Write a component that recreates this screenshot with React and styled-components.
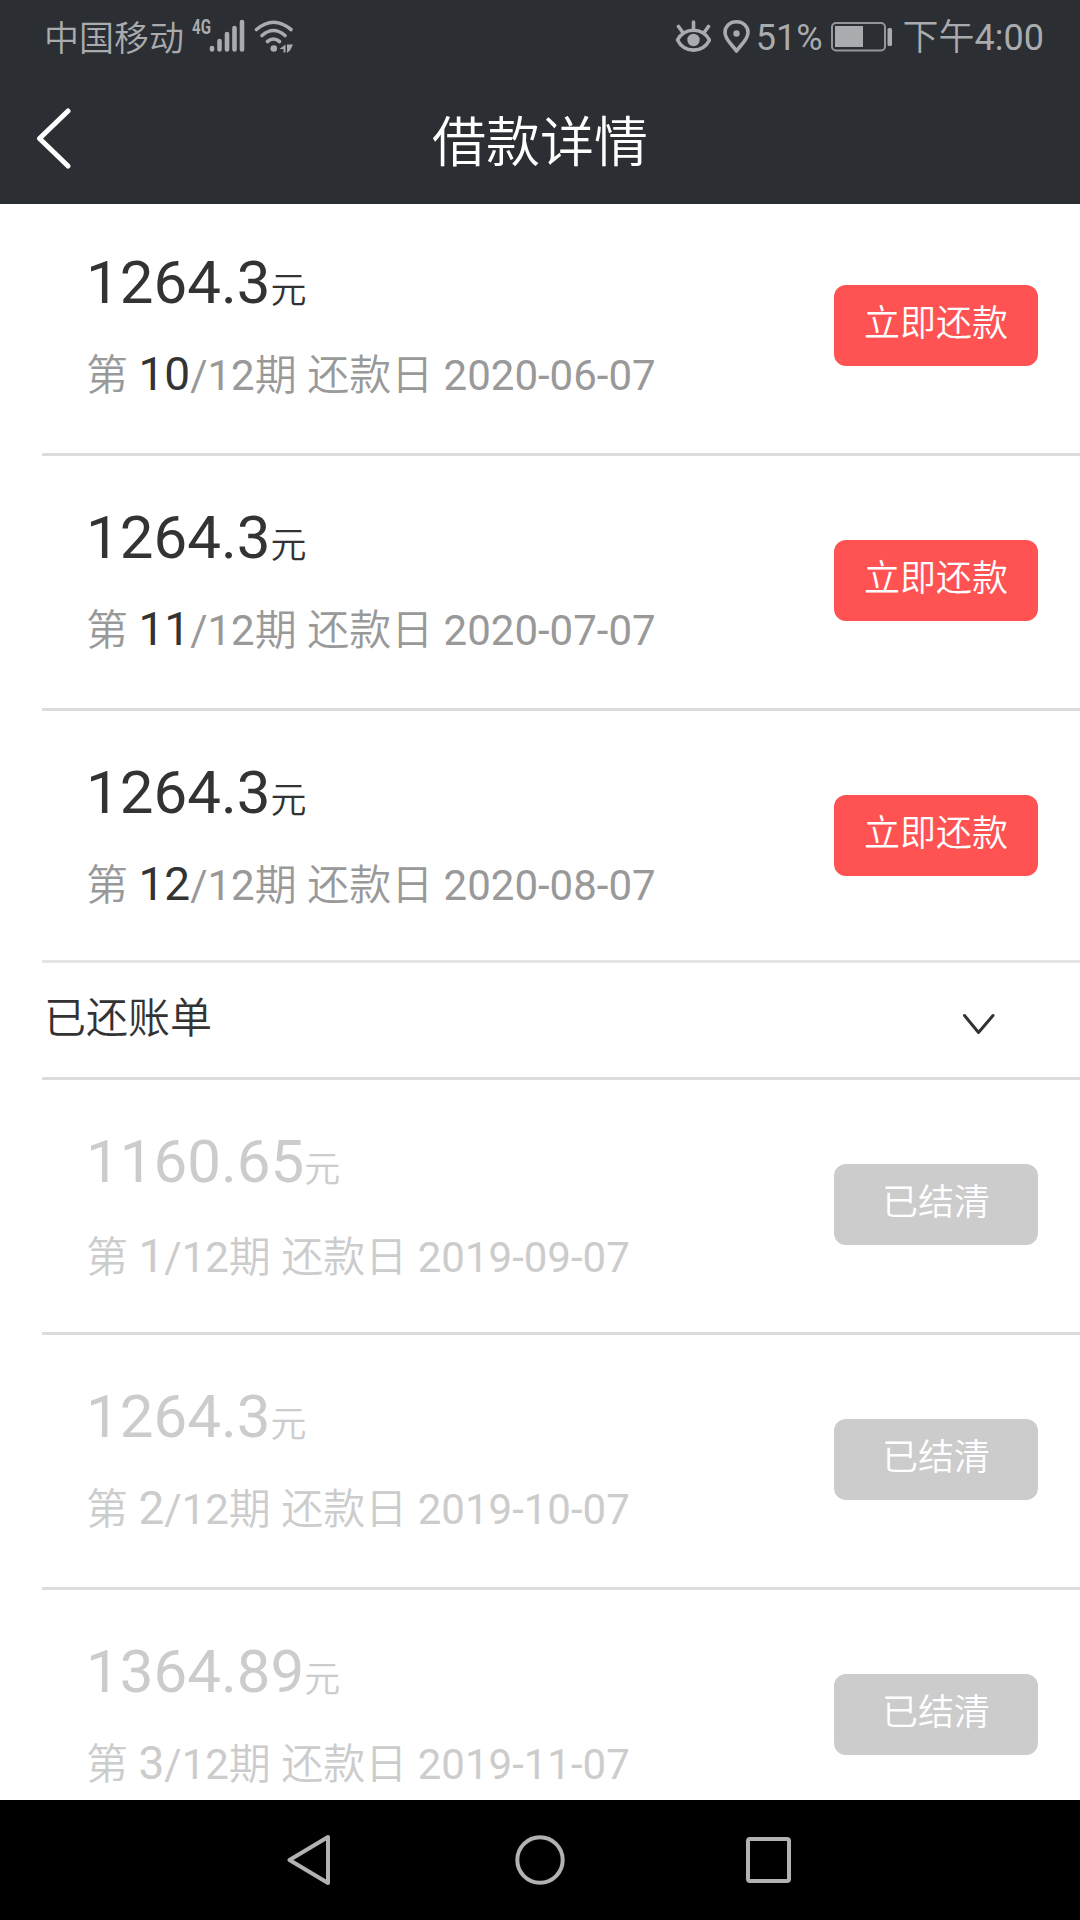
import React from 'react';
import styled, { createGlobalStyle } from 'styled-components';

const openBills = [
  { amount: '1264.3', period: 10, date: '2020-06-07' },
  { amount: '1264.3', period: 11, date: '2020-07-07' },
  { amount: '1264.3', period: 12, date: '2020-08-07' },
];

const settledBills = [
  { amount: '1160.65', period: 1, date: '2019-09-07' },
  { amount: '1264.3', period: 2, date: '2019-10-07' },
  { amount: '1364.89', period: 3, date: '2019-11-07' },
];

const SignalIcon = () => (
  <svg width="36" height="36" viewBox="0 0 36 36" stroke="#a9abae" strokeWidth="4.6" strokeLinecap="round">
    <path d="M3 29v1.500M10.500 22v8.500M18 15v15.500M25.500 9v21.500M33 3v27.500" />
  </svg>
);

const WifiIcon = () => (
  <svg width="40" height="36" viewBox="0 0 40 36" fill="none" stroke="#a9abae" strokeWidth="3.6" strokeLinecap="round">
    <path d="M2.500 10.500Q19.500 -4 37 10.500M8 16.500Q19.500 6.500 31 16.500M13.500 22.500Q19.500 17.500 25.500 22.500" />
    <circle cx="19.800" cy="29.500" r="3.300" fill="#a9abae" stroke="none" />
    <path d="M31.500 25.500v8h-2v-3.500h-4zM33 34v-8.500h6l-3 6z" fill="#a9abae" stroke="none" />
  </svg>
);

const EyeIcon = () => (
  <svg width="36" height="34" viewBox="0 0 36 34" fill="none" stroke="#a9abae" strokeWidth="3.6" strokeLinecap="round">
    <path d="M2.500 20C9.500 7 27.500 7 34.500 20C27.500 33.500 9.500 33.500 2.500 20Z" strokeLinejoin="round" />
    <path d="M18.500 2v7M3.500 6.500l4 5.500M33.500 6.500l-4 5.500" />
    <circle cx="18.500" cy="20" r="6.200" fill="#a9abae" stroke="none" />
  </svg>
);

const PinIcon = () => (
  <svg width="28" height="34" viewBox="0 0 28 34" fill="none" stroke="#a9abae" strokeWidth="3.6" strokeLinejoin="round">
    <path d="M14.500 31C9.500 24 3 19.500 3 12.500C3 6 8 1.800 14.500 1.800S26 6 26 12.500C26 19.500 19.500 24 14.500 31Z" />
    <circle cx="14.500" cy="13.500" r="3.200" fill="#a9abae" stroke="none" />
  </svg>
);

const BatteryIcon = () => (
  <svg width="62" height="30" viewBox="0 0 62 30">
    <rect x="1" y="1" width="53" height="27.500" rx="4" fill="none" stroke="#94969a" strokeWidth="2" />
    <rect x="4" y="4" width="28" height="21" fill="#a9abae" />
    <rect x="56.500" y="6" width="4.500" height="18" rx="1.500" fill="#a9abae" />
  </svg>
);

const BillRow = ({ bill, settled }) => (
  <Row $settled={settled}>
    <RowInfo>
      <Amount>
        {bill.amount}
        <Unit>元</Unit>
      </Amount>
      <Schedule $settled={settled}>
        <Han>第</Han>
        {' '}
        <Period $settled={settled}>{bill.period}</Period>
        /12
        <Han>期</Han>
        {' '}
        <Han>还款日</Han>
        {` ${bill.date}`}
      </Schedule>
    </RowInfo>
    <PayButton type="button" $settled={settled}>{settled ? '已结清' : '立即还款'}</PayButton>
  </Row>
);

const App = () => (
  <Screen>
    <GlobalStyle />
    <StatusBar>
      <StatusGroup>
        <Carrier>中国移动</Carrier>
        <Network>4G</Network>
        <SignalIcon />
        <WifiSlot><WifiIcon /></WifiSlot>
      </StatusGroup>
      <StatusGroup>
        <EyeIcon />
        <PinSlot><PinIcon /></PinSlot>
        <Percent>51%</Percent>
        <BatteryIcon />
        <Clock>
          <Han>下午</Han>
          4:00
        </Clock>
      </StatusGroup>
    </StatusBar>
    <TitleBar>
      <BackButton type="button" aria-label="返回">
        <svg width="36" height="62" viewBox="0 0 36 62" fill="none" stroke="#fff" strokeWidth="5" strokeLinecap="round" strokeLinejoin="round">
          <path d="M32 3L3.500 30.500L32 58" />
        </svg>
      </BackButton>
      <Title>借款详情</Title>
    </TitleBar>
    <Content>
      <OpenList>
        {openBills.map((bill) => <BillRow key={bill.period} bill={bill} />)}
      </OpenList>
      <SectionHeader>
        <SectionTitle>已还账单</SectionTitle>
        <SectionArrow width="34" height="24" viewBox="0 0 34 24">
          <path d="M2.500 2.500L16.500 19.500L31 2.500" />
        </SectionArrow>
      </SectionHeader>
      <SettledList>
        {settledBills.map((bill) => <BillRow key={bill.period} bill={bill} settled />)}
      </SettledList>
    </Content>
    <NavBar>
      <svg width="46" height="52" viewBox="0 0 46 52" fill="none" stroke="#b2b2b2" strokeWidth="4" strokeLinejoin="round">
        <path d="M41 3v46L2.500 26Z" />
      </svg>
      <svg width="50" height="50" viewBox="0 0 50 50" fill="none" stroke="#b2b2b2" strokeWidth="4">
        <circle cx="25" cy="25" r="22.700" />
      </svg>
      <svg width="46" height="46" viewBox="0 0 46 46" fill="none" stroke="#b2b2b2" strokeWidth="4">
        <rect x="2" y="2" width="41" height="42" rx="2" />
      </svg>
    </NavBar>
  </Screen>
);

export default App;

// region STYLES

const GlobalStyle = createGlobalStyle`
  body {
    margin: 0;
    background: #ffffff;
  }

  * {
    box-sizing: border-box;
  }

  svg {
    display: block;
    flex-shrink: 0;
  }

  button {
    padding: 0;
    border: none;
    font: inherit;
  }
`;

const Screen = styled.div`
  display: flex;
  flex-direction: column;
  width: 1080px;
  height: 1920px;
  overflow: hidden;
  background: #ffffff;
  font-family: Roboto, "Noto Sans CJK SC", sans-serif;
  font-weight: 400;
  color: #333333;
`;

const Han = styled.span`
  font-weight: 350;
`;

const StatusBar = styled.div`
  display: flex;
  justify-content: space-between;
  flex-shrink: 0;
  height: 74px;
  padding: 0 36px 0 44px;
  background: #2b2e32;
  color: #a9abae;
`;

const StatusGroup = styled.div`
  display: flex;
  align-items: center;
`;

const Carrier = styled(Han)`
  padding-top: 5px;
  font-size: 35px;
  line-height: 69px;
`;

const Network = styled.span`
  align-self: flex-start;
  width: 17px;
  margin: 17px 0 0 8px;
  font-size: 21px;
  font-weight: 700;
  line-height: 21px;
  transform: scaleX(0.72);
  transform-origin: left center;
`;

const WifiSlot = styled.div`
  margin-left: 9px;
`;

const PinSlot = styled.div`
  margin-left: 11px;
`;

const Percent = styled.span`
  margin: 0 8px 0 6px;
  padding-top: 2px;
  font-size: 36px;
`;

const Clock = styled.span`
  margin-left: 10px;
  padding-top: 2px;
  font-size: 36px;
  line-height: 72px;
`;

const TitleBar = styled.div`
  display: flex;
  align-items: center;
  flex-shrink: 0;
  height: 130px;
  padding: 0 36px;
  background: #2b2e32;
  color: #ffffff;
`;

const BackButton = styled.button`
  width: 36px;
  background: none;
`;

const Title = styled.h1`
  flex: 1;
  margin: 0 36px 0 0;
  padding-top: 10px;
  font-size: 54px;
  font-weight: 350;
  line-height: 120px;
  text-align: center;
`;

const Content = styled.div`
  flex: 1;
  min-height: 0;
  padding-left: 42px;
  overflow: hidden;
`;

const Row = styled.div`
  display: flex;
  justify-content: space-between;
  align-items: flex-start;
  height: 255px;
  padding: 0 42px 0 44px;
  border-bottom: 3px solid #dcdcdc;
  color: ${(props) => (props.$settled ? '#cccccc' : '#333333')};
`;

const RowInfo = styled.div`
  padding-top: 42px;
`;

const Amount = styled.div`
  height: 80px;
  font-size: 60px;
  line-height: 80px;
  white-space: nowrap;
`;

const Unit = styled(Han)`
  font-size: 36px;
`;

const Schedule = styled.div`
  height: 60px;
  margin-top: 21px;
  font-size: 42px;
  line-height: 60px;
  white-space: nowrap;
  color: ${(props) => (props.$settled ? '#cccccc' : '#999999')};
`;

const Period = styled.span`
  font-size: 46px;
  color: ${(props) => (props.$settled ? '#cccccc' : '#333333')};
`;

const PayButton = styled.button`
  width: 204px;
  height: 81px;
  margin-top: 84px;
  padding-bottom: 11px;
  border-radius: 12px;
  background: ${(props) => (props.$settled ? '#cccccc' : '#ff5252')};
  color: #ffffff;
  font-size: 36px;
  font-weight: 350;
`;

const OpenList = styled.div`
  margin-top: -3px;

  ${Row}:last-child {
    height: 252px;
    border-color: #e5e5e5;
  }
`;

const SettledList = styled.div`
  ${Row}:first-child ${Schedule} {
    margin-top: 24px;
  }
`;

const SectionHeader = styled.div`
  display: flex;
  justify-content: space-between;
  align-items: center;
  height: 117px;
  padding: 0 84px 0 2px;
  border-bottom: 3px solid #dcdcdc;
`;

const SectionTitle = styled(Han)`
  padding-bottom: 12px;
  font-size: 42px;
`;

const SectionArrow = styled.svg`
  margin-top: 9px;
  fill: none;
  stroke: #333333;
  stroke-width: 3px;
  stroke-linecap: round;
  stroke-linejoin: round;
`;

const NavBar = styled.div`
  display: flex;
  justify-content: space-between;
  align-items: center;
  flex-shrink: 0;
  height: 120px;
  padding: 0 288px 0 287px;
  background: #000000;
`;

// endregion
